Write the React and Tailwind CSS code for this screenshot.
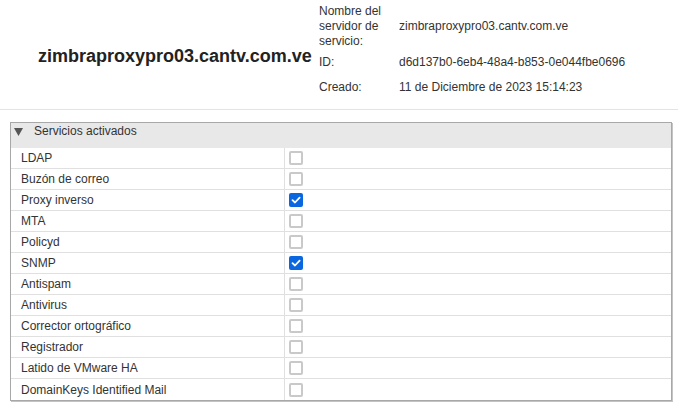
import React from "react";

const services = [
  ["LDAP", false],
  ["Buzón de correo", false],
  ["Proxy inverso", true],
  ["MTA", false],
  ["Policyd", false],
  ["SNMP", true],
  ["Antispam", false],
  ["Antivirus", false],
  ["Corrector ortográfico", false],
  ["Registrador", false],
  ["Latido de VMware HA", false],
  ["DomainKeys Identified Mail", false],
];

function Check({ checked }) {
  if (checked) {
    return (
      <div className="w-[14px] h-[14px] rounded-[2px] bg-[#0b67e0] flex items-center justify-center">
        <svg width="10" height="10" viewBox="0 0 10 10">
          <path d="M1.5 5.2 L4 7.5 L8.6 2.6" fill="none" stroke="white" strokeWidth="1.8" strokeLinecap="round" strokeLinejoin="round" />
        </svg>
      </div>
    );
  }
  return <div className="w-[14px] h-[14px] rounded-[2px] border-2 border-[#c9c9c9] bg-white" />;
}

export default function App() {
  return (
    <div className="w-[678px] h-[404px] bg-white text-[12px] text-[#333] overflow-hidden" style={{ fontFamily: '"Liberation Sans", Arial, sans-serif' }}>
      <div className="flex h-[110px] border-b border-[#e3e3e3]">
        <div className="w-[319px] pl-[38px] pt-[45px]">
          <div className="text-[18px] font-bold leading-[22px] text-[#222] whitespace-nowrap">zimbraproxypro03.cantv.com.ve</div>
        </div>
        <div className="flex flex-col pt-[4px]">
          <div className="flex">
            <div className="w-[80px] leading-[15px]">Nombre del<br />servidor de<br />servicio:</div>
            <div className="flex items-center leading-[15px]">zimbraproxypro03.cantv.com.ve</div>
          </div>
          <div className="flex mt-[6px] leading-[15px]">
            <div className="w-[80px]">ID:</div>
            <div>d6d137b0-6eb4-48a4-b853-0e044fbe0696</div>
          </div>
          <div className="flex mt-[10px] leading-[15px]">
            <div className="w-[80px]">Creado:</div>
            <div>11 de Diciembre de 2023 15:14:23</div>
          </div>
        </div>
      </div>
      <div className="mt-[12px] ml-[10px] w-[662px] border border-[#a8a8a8] shadow-[1px_1px_0_#c4c4c4]">
        <div className="h-[25px] bg-[#e8e8e9] flex items-start pt-[1px] leading-[15px]">
          <svg width="9" height="8" viewBox="0 0 9 8" className="ml-[3px] mt-[4px]">
            <path d="M0 0 H9 L4.5 8 Z" fill="#555" />
          </svg>
          <span className="ml-[11px]">Servicios activados</span>
        </div>
        {services.map(([name, checked], i) => (
          <div key={name} className={"flex h-[21px] " + (i < services.length - 1 ? "border-b border-[#e0e0e0]" : "")}>
            <div className="w-[274px] pl-[10px] flex items-center border-r border-[#e0e0e0]">{name}</div>
            <div className="pl-[4px] flex items-center">
              <Check checked={checked} />
            </div>
          </div>
        ))}
      </div>
    </div>
  );
}
